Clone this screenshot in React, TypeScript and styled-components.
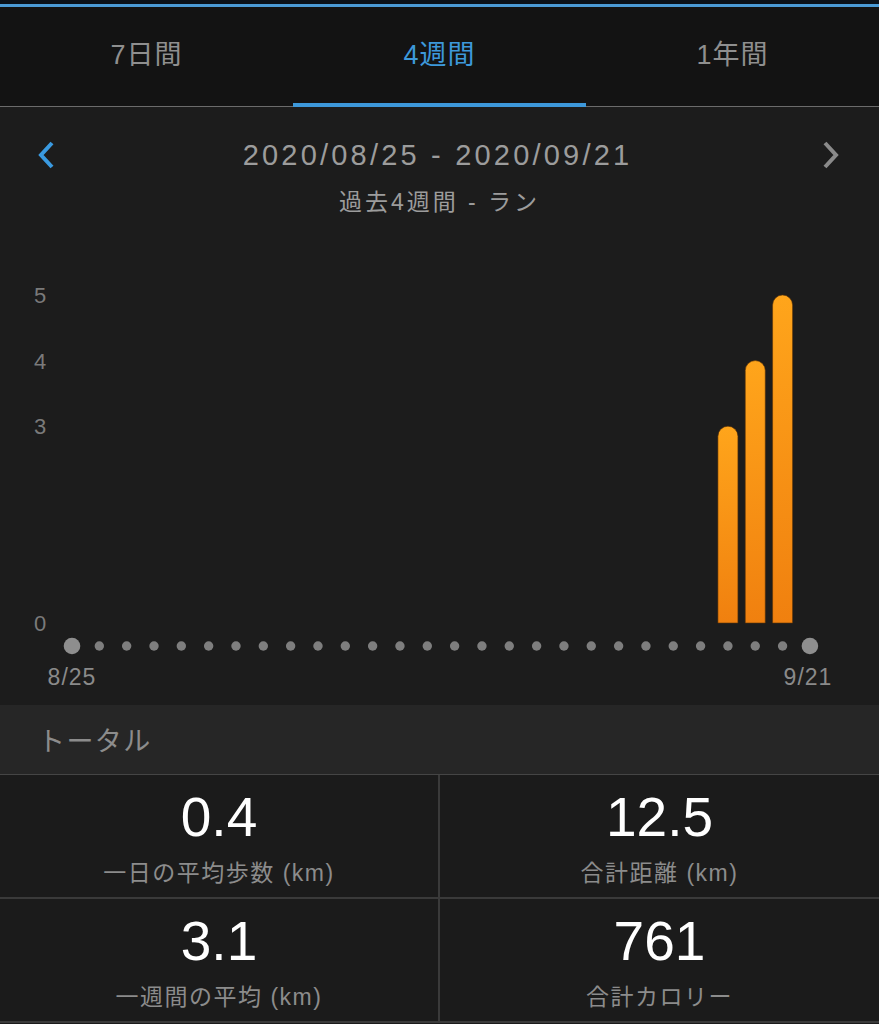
import React from 'react';
import styled, { createGlobalStyle, css } from 'styled-components';

// ─── Data ─────────────────────────────────────────────────────────────────────
const tabs = ['7日間', '4週間', '1年間'];
const activeTab = 1;

const DAY_COUNT = 28;
const runs: Record<number, number> = { 24: 3, 25: 4, 26: 5 };
const yTicks = [5, 4, 3, 0];

const stats = [
  { value: '0.4', label: '一日の平均歩数 (km)' },
  { value: '12.5', label: '合計距離 (km)' },
  { value: '3.1', label: '一週間の平均 (km)' },
  { value: '761', label: '合計カロリー' },
];

// chart geometry (svg units)
const X0 = 72;
const STEP = 27.33;
const BASE = 406;
const UNIT = 65.6;
const DOT_Y = 429;

// ─── Styles ───────────────────────────────────────────────────────────────────
const GlobalStyle = createGlobalStyle`
  html, body {
    margin: 0;
    padding: 0;
    background: #1b1b1b;
  }
  body {
    font-family: "Liberation Sans", "Noto Sans CJK JP", sans-serif;
    -webkit-font-smoothing: antialiased;
  }
`;

const Screen = styled.div`
  width: 100%;
  min-height: 1024px;
  background: #1b1b1b;
  display: flex;
  flex-direction: column;
  overflow: hidden;
`;

const TopEdge = styled.div`
  height: 4px;
  background: #0b121a;
  border-bottom: 3px solid #4b9bd6;
`;

const TabBar = styled.nav`
  display: grid;
  grid-template-columns: repeat(3, 1fr);
  height: 100px;
  box-sizing: border-box;
  background: #131313;
  border-bottom: 1px solid #6b6b6b;
`;

const Tab = styled.div<{ $active?: boolean }>`
  position: relative;
  display: flex;
  align-items: center;
  justify-content: center;
  padding-bottom: 9px;
  font-size: 27px;
  letter-spacing: 1px;
  color: ${(p) => (p.$active ? '#3d98da' : '#8f8f8f')};
  ${(p) =>
    p.$active &&
    css`
      &::after {
        content: '';
        position: absolute;
        left: 0;
        right: 0;
        bottom: -1px;
        height: 4px;
        background: #3d98da;
      }
    `}
`;

const ChartSection = styled.section`
  background: #1c1c1c;
  height: 598px;
  display: flex;
  flex-direction: column;
`;

const RangeRow = styled.div`
  display: grid;
  grid-template-columns: 92px 1fr 96px;
  align-items: center;
  padding-top: 31px;
`;

const NavButton = styled.div`
  display: flex;
  justify-content: center;
  align-items: center;
  height: 34px;
`;

const RangeText = styled.div`
  text-align: center;
  font-size: 29px;
  line-height: 34px;
  letter-spacing: 3.2px;
  color: #9c9c9c;
`;

const SubTitle = styled.div`
  margin-top: 15px;
  text-align: center;
  font-size: 23px;
  line-height: 30px;
  letter-spacing: 3px;
  color: #9c9c9c;
`;

const ChartSvg = styled.svg`
  display: block;
  width: 100%;
  flex: 1;
`;

const TotalsHeader = styled.div`
  height: 70px;
  box-sizing: border-box;
  background: #262626;
  border-bottom: 1px solid #454545;
  display: flex;
  align-items: center;
  padding-left: 38px;
  font-size: 27px;
  letter-spacing: 1.4px;
  color: #8c8c8c;
`;

const StatsGrid = styled.div`
  display: grid;
  grid-template-columns: 440px 1fr;
  background: #1b1b1b;
`;

const StatCell = styled.div`
  display: flex;
  flex-direction: column;
  align-items: center;
  padding: 12px 0 10px;
  border-bottom: 2px solid #3a3a3a;
  &:nth-child(odd) {
    border-right: 2px solid #3a3a3a;
  }
`;

const StatValue = styled.div`
  font-size: 55px;
  line-height: 60px;
  color: #ffffff;
`;

const StatLabel = styled.div`
  margin-top: 12px;
  font-size: 23px;
  line-height: 28px;
  letter-spacing: 1.5px;
  color: #8c8c8c;
`;

// ─── Parts ────────────────────────────────────────────────────────────────────
function Chevron({ dir, color }: { dir: 'left' | 'right'; color: string }) {
  const d = dir === 'left' ? 'M16 3 L5 15 L16 27' : 'M4 3 L15 15 L4 27';
  return (
    <svg width="20" height="30" viewBox="0 0 20 30">
      <path d={d} fill="none" stroke={color} strokeWidth="4" strokeLinecap="butt" strokeLinejoin="miter" />
    </svg>
  );
}

function barPath(cx: number, value: number) {
  const w = 20;
  const r = w / 2;
  const top = BASE - value * UNIT;
  const x = cx - r;
  return `M${x},${BASE} V${top + r} A${r},${r} 0 0 1 ${x + w},${top + r} V${BASE} Z`;
}

function RunChart() {
  return (
    <ChartSvg viewBox="0 0 879 488" preserveAspectRatio="xMidYMin meet">
      <defs>
        <linearGradient id="barFill" x1="0" y1="0" x2="0" y2="1">
          <stop offset="0" stopColor="#ffa51b" />
          <stop offset="1" stopColor="#f0800f" />
        </linearGradient>
      </defs>
      {yTicks.map((v) => (
        <text
          key={v}
          x={40}
          y={BASE - v * UNIT + 8}
          textAnchor="middle"
          fontSize="22"
          fill="#7a7a7a"
          fontFamily='"Liberation Sans", sans-serif'
        >
          {v}
        </text>
      ))}
      {Object.entries(runs).map(([i, v]) => (
        <path key={i} d={barPath(X0 + Number(i) * STEP, v)} fill="url(#barFill)" stroke="#5a3206" strokeWidth="0.6" />
      ))}
      {Array.from({ length: DAY_COUNT }, (_, i) => {
        const edge = i === 0 || i === DAY_COUNT - 1;
        return <circle key={i} cx={X0 + i * STEP} cy={DOT_Y} r={edge ? 8.3 : 4.7} fill={edge ? '#8e8e8e' : '#7e7e7e'} />;
      })}
      <text x={72} y={468} textAnchor="middle" fontSize="23" letterSpacing="1" fill="#8a8a8a" fontFamily='"Liberation Sans", sans-serif'>
        8/25
      </text>
      <text x={808} y={468} textAnchor="middle" fontSize="23" letterSpacing="1" fill="#8a8a8a" fontFamily='"Liberation Sans", sans-serif'>
        9/21
      </text>
    </ChartSvg>
  );
}

// ─── Component ────────────────────────────────────────────────────────────────
export default function App() {
  return (
    <>
      <GlobalStyle />
      <Screen>
        <TopEdge />
        <TabBar>
          {tabs.map((t, i) => (
            <Tab key={t} $active={i === activeTab}>
              {t}
            </Tab>
          ))}
        </TabBar>
        <ChartSection>
          <RangeRow>
            <NavButton>
              <Chevron dir="left" color="#3a9ae0" />
            </NavButton>
            <RangeText>2020/08/25 - 2020/09/21</RangeText>
            <NavButton>
              <Chevron dir="right" color="#8a8a8a" />
            </NavButton>
          </RangeRow>
          <SubTitle>過去4週間 - ラン</SubTitle>
          <RunChart />
        </ChartSection>
        <TotalsHeader>トータル</TotalsHeader>
        <StatsGrid>
          {stats.map((s) => (
            <StatCell key={s.label}>
              <StatValue>{s.value}</StatValue>
              <StatLabel>{s.label}</StatLabel>
            </StatCell>
          ))}
        </StatsGrid>
      </Screen>
    </>
  );
}
